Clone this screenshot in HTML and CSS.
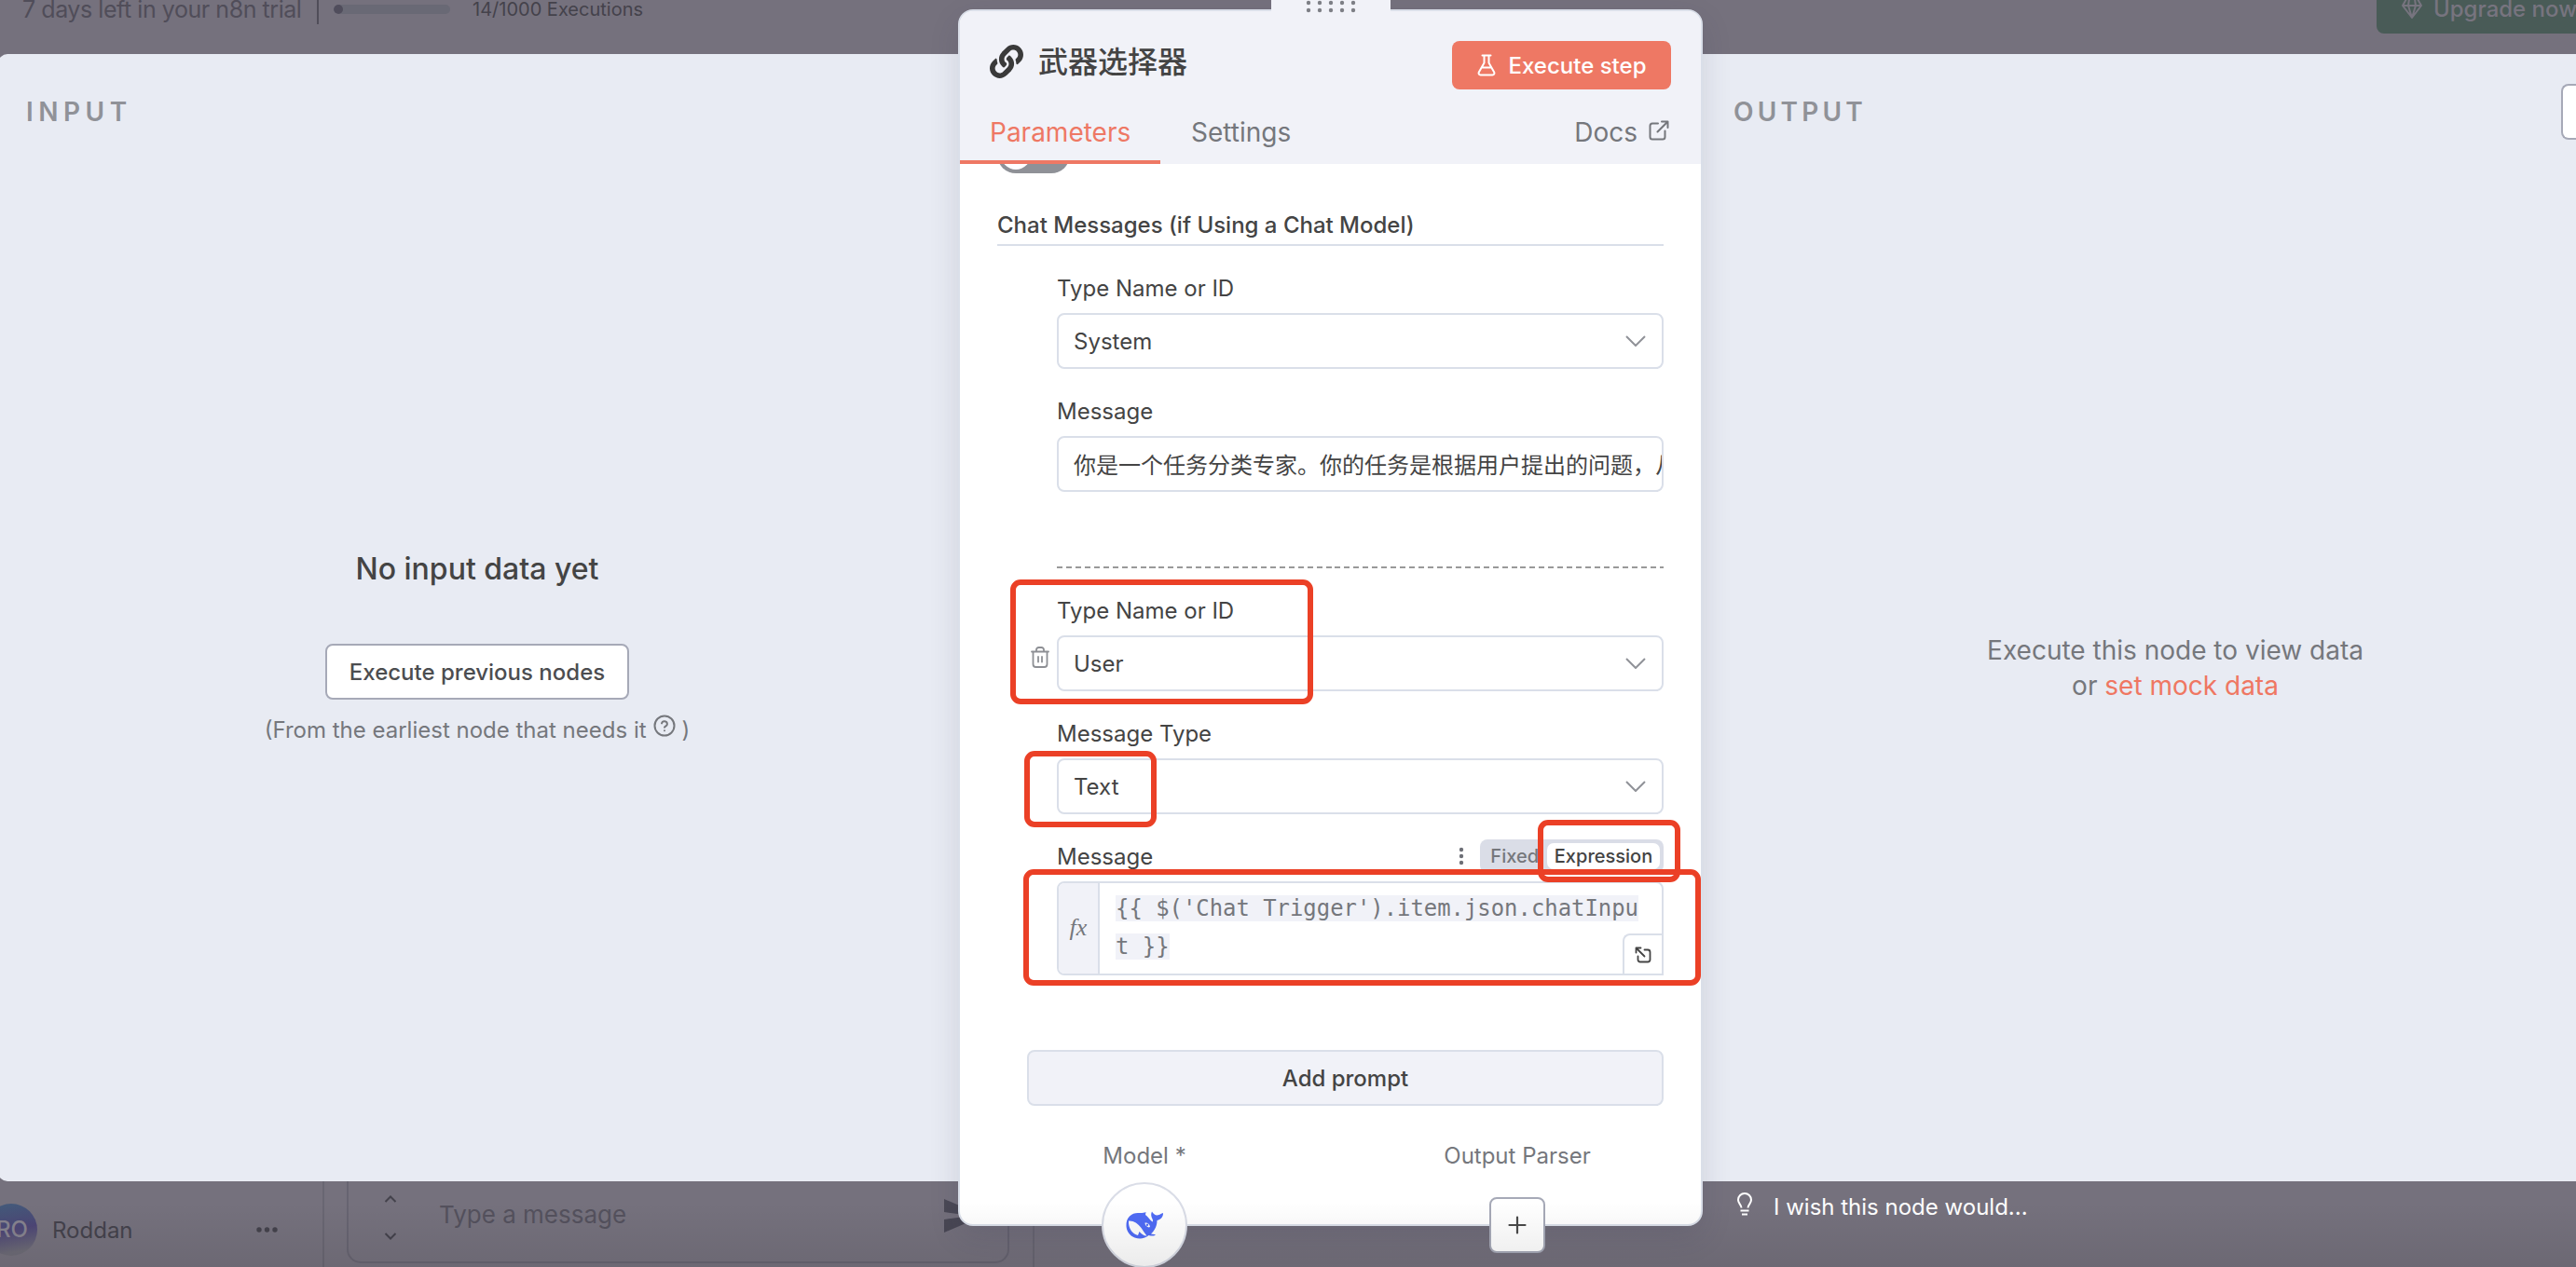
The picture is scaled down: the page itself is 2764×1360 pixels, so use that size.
FILE: index.html
```html
<!DOCTYPE html>
<html lang="en">
<head>
<meta charset="utf-8">
<title>n8n</title>
<link rel="stylesheet" href="styles.css">
</head>
<body>
<div class="app">
  <header class="topbar">
    <span class="trial">7 days left in your n8n trial</span>
    <span class="bar-divider"></span>
    <span class="progress"><span class="progress-fill"></span></span>
    <span class="executions">14/1000 Executions</span>
    <div class="upgrade">
      <svg width="24" height="24" viewBox="0 0 24 24" fill="none" stroke="currentColor" stroke-width="2" stroke-linejoin="round"><path d="M6 2h12l4 7-10 13L2 9zM2 9h20M9 2L8 9l4 13 4-13-1-7"/></svg>
      <span class="upgrade-text">Upgrade now</span>
    </div>
  </header>

  <main class="panels">
    <section class="panel panel-input">
      <h2 class="panel-title">INPUT</h2>
      <div class="empty-input">
        <p class="empty-title">No input data yet</p>
        <button class="btn-outline"><span class="btn-outline-text">Execute previous nodes</span></button>
        <p class="empty-hint"><span class="hint-text">(From the earliest node that needs it</span>
          <svg class="help" width="24" height="24" viewBox="0 0 24 24" fill="none" stroke="currentColor" stroke-width="2" stroke-linecap="round"><circle cx="12" cy="12" r="10.5"/><path d="M9 9.4a3 3 0 0 1 5.9.8c0 2-2.9 2.6-2.9 3.6M12 17.2v.1"/></svg>
          <span>)</span></p>
      </div>
    </section>
    <section class="panel panel-output">
      <div class="output-head">
        <h2 class="panel-title">OUTPUT</h2>
        <span class="edge-button"></span>
      </div>
      <p class="empty-output"><span class="out-text">Execute this node to view data</span><br>or <span class="link">set mock data</span></p>
    </section>
  </main>

  <footer class="bottom">
    <div class="user">
      <span class="avatar">RO</span>
      <span class="username">Roddan</span>
      <svg width="24" height="8" viewBox="0 0 24 8" fill="currentColor"><circle cx="3" cy="4" r="2.7"/><circle cx="11.5" cy="4" r="2.7"/><circle cx="20" cy="4" r="2.7"/></svg>
    </div>
    <div class="chat">
      <div class="chat-box">
        <svg width="14" height="56" viewBox="0 0 14 56" fill="none" stroke="currentColor" stroke-width="2"><path d="M1.500 14L7 8.500l5.500 5.500M1.500 48L7 53.500l5.500-5.500"/></svg>
        <span class="placeholder">Type a message</span>
        <svg class="send" width="42" height="36" viewBox="0 0 42 36" fill="currentColor"><path d="M0 0l42 18L0 36V22l30-4L0 14z"/></svg>
      </div>
    </div>
    <div class="wish">
      <svg width="18" height="26" viewBox="0 0 18 26" fill="none" stroke="currentColor" stroke-width="2"><path d="M5.500 16.500C5.500 13 2 12 2 8a7 7 0 0 1 14 0c0 4-3.500 5-3.500 8.500M4.500 19.500h9M6 23.500h6"/></svg>
      <span class="wish-text">I wish this node would...</span>
    </div>
  </footer>

  <div class="modal">
    <div class="drag">
      <svg width="54" height="14" viewBox="0 0 54 14" fill="#7d7f86"><circle cx="3" cy="3" r="2.200"/><circle cx="15" cy="3" r="2.200"/><circle cx="27" cy="3" r="2.200"/><circle cx="39" cy="3" r="2.200"/><circle cx="51" cy="3" r="2.200"/><circle cx="3" cy="11" r="2.200"/><circle cx="15" cy="11" r="2.200"/><circle cx="27" cy="11" r="2.200"/><circle cx="39" cy="11" r="2.200"/><circle cx="51" cy="11" r="2.200"/></svg>
    </div>
    <div class="modal-head">
      <div class="title-row">
        <svg class="node-icon" width="36" height="36" viewBox="0 0 512 512" fill="#3a3a3a"><path d="M326.612 185.391c59.747 59.809 58.927 155.698.36 214.590-.11.120-.24.250-.36.370l-67.200 67.200c-59.270 59.270-155.699 59.262-214.960 0-59.270-59.260-59.270-155.700 0-214.960l37.106-37.106c9.840-9.840 26.786-3.300 27.294 10.606.648 17.722 3.826 35.527 9.690 52.721 1.986 5.822.567 12.262-3.783 16.612l-13.087 13.087c-28.026 28.026-28.905 73.660-1.155 101.960 28.024 28.579 74.086 28.749 102.325.510l67.200-67.190c28.191-28.191 28.073-73.757 0-101.830-3.701-3.694-7.429-6.564-10.341-8.569a16.037 16.037 0 0 1-6.947-12.606c-.396-10.567 3.348-21.456 11.698-29.806l21.054-21.055c5.521-5.521 14.182-6.199 20.584-1.731a152.482 152.482 0 0 1 20.522 17.197zM467.547 44.449c-59.261-59.262-155.690-59.270-214.960 0l-67.200 67.200c-.120.120-.250.250-.360.370-58.566 58.892-59.387 154.781.360 214.590a152.454 152.454 0 0 0 20.521 17.196c6.402 4.468 15.064 3.789 20.584-1.731l21.054-21.055c8.350-8.350 12.094-19.239 11.698-29.806a16.037 16.037 0 0 0-6.947-12.606c-2.912-2.005-6.640-4.875-10.341-8.569-28.073-28.073-28.191-73.639 0-101.830l67.200-67.190c28.239-28.239 74.300-28.069 102.325.510 27.750 28.300 26.872 73.934-1.155 101.960l-13.087 13.087c-4.350 4.350-5.769 10.790-3.783 16.612 5.864 17.194 9.042 34.999 9.690 52.721.509 13.906 17.454 20.446 27.294 10.606l37.106-37.106c59.271-59.259 59.271-155.699.001-214.959z"/></svg>
        <h1 class="node-title">武器选择器</h1>
        <button class="btn-primary">
          <svg width="20" height="24" viewBox="0 0 20 24" fill="none" stroke="currentColor" stroke-width="2" stroke-linecap="round" stroke-linejoin="round"><path d="M5.500 1.500h9M7.500 1.500v8L1.800 19.500c-.7 1.500.2 3 1.700 3h13c1.500 0 2.400-1.500 1.700-3L12.500 9.500v-8M4.800 14.500h10.400"/></svg>
          <span class="exec-text">Execute step</span>
        </button>
      </div>
      <nav class="tabs">
        <span class="tab tab-active"><span class="param-text">Parameters</span></span>
        <span class="tab tab-settings">Settings</span>
        <span class="tab tab-docs"><span class="docs-text">Docs</span>
          <svg width="22" height="22" viewBox="0 0 22 22" fill="none" stroke="currentColor" stroke-width="2" stroke-linecap="round" stroke-linejoin="round"><path d="M14 1.500h6.500V8M20 2L9.500 12.500M10 3.500H4A2.500 2.500 0 0 0 1.500 6v12A2.500 2.500 0 0 0 4 20.500h11a2.500 2.500 0 0 0 2.500-2.500v-6.500"/></svg></span>
      </nav>
    </div>

    <div class="modal-body">
      <div class="toggle-clip"><span class="toggle"><span class="toggle-knob"></span></span></div>
      <h3 class="section-title"><span class="section-text">Chat Messages (if Using a Chat Model)</span></h3>
      <div class="fields">
        <div class="field">
          <label class="label">Type Name or ID</label>
          <div class="select"><span>System</span><svg class="chev" viewBox="0 0 22 12"><path d="M1 1l10 10L21 1"/></svg></div>
        </div>
        <div class="field">
          <label class="label">Message</label>
          <div class="select text-input">你是一个任务分类专家。你的任务是根据用户提出的问题，从</div>
        </div>
        <div class="dashed"></div>
        <div class="field">
          <label class="label">Type Name or ID</label>
          <div class="select"><span>User</span><svg class="chev" viewBox="0 0 22 12"><path d="M1 1l10 10L21 1"/></svg>
            <svg class="trash" width="20" height="23" viewBox="0 0 20 23" fill="none" stroke="#8d8f94" stroke-width="1.800" stroke-linecap="round" stroke-linejoin="round"><path d="M1 5.500h18M2.500 5.500V19a3 3 0 0 0 3 3h9a3 3 0 0 0 3-3V5.500M6 5V3.500A2.500 2.500 0 0 1 8.500 1h3A2.500 2.500 0 0 1 14 3.500V5M8 11v5.500M12 11v5.500"/></svg>
          </div>
        </div>
        <div class="field">
          <label class="label">Message Type</label>
          <div class="select"><span>Text</span><svg class="chev" viewBox="0 0 22 12"><path d="M1 1l10 10L21 1"/></svg></div>
        </div>
        <div class="field">
          <div class="label label-row"><span>Message</span>
            <span class="options">
              <svg width="6" height="20" viewBox="0 0 6 20" fill="#6e7077"><circle cx="3" cy="3" r="2.200"/><circle cx="3" cy="10" r="2.200"/><circle cx="3" cy="17" r="2.200"/></svg>
              <span class="switch"><span class="switch-fixed">Fixed</span><span class="switch-on">Expression</span></span>
            </span>
          </div>
          <div class="expression">
            <div class="fx">fx</div>
            <div class="code"><span class="code-hl">{{ $('Chat Trigger').item.json.chatInpu</span><br><span class="code-hl">t }}</span></div>
            <div class="expand"><svg width="18" height="18" viewBox="0 0 18 18" fill="none" stroke="#444" stroke-width="1.800" stroke-linecap="round" stroke-linejoin="round"><path d="M1.500 6.500v-5h5M2 2l8.500 8.500M10.500 3.500H14A2.500 2.500 0 0 1 16.500 6v8a2.500 2.500 0 0 1-2.500 2.500H6A2.500 2.500 0 0 1 3.500 14v-3.500"/></svg></div>
          </div>
        </div>
      </div>
      <button class="add-prompt"><span class="add-text">Add prompt</span></button>
      <div class="connections">
        <div class="conn">
          <span class="conn-label">Model *</span>
          <span class="conn-circle">
            <svg width="42" height="32" viewBox="0 0 42 32"><path fill="#4f6bf5" d="M1.500 17C1 7 8 2.500 15 3c3 .1 5.500 0 7.500-1l-.5 3c3 2 4.500 5.500 7.500 7.500 1.500-1.500-.5-3.500-1-5.500-.7-2.500 0-4.500.5-5.500 1.500 2 2.500 3.500 5 4 2.500 0 4-1.500 7-2.500.3 3.500-2 7-6.500 8 0 6-2.500 10.500-6.500 14.500l5 .8c-1 1.500-4 1.700-7.500.7-4 3.500-9.500 4.500-15 2.500C5 27.500 1.800 22.500 1.500 17z"/><path fill="#fdfdfd" d="M4 11.500c5-.5 10 2.500 13.500 7.500 2 3 4 6 6 8.500-3 .3-5-1.500-8-4.500l-1.500 4C8.500 25.500 3.500 20 4 11.500z"/><path fill="#fdfdfd" d="M21.500 13.500c2.500-.5 5 1 5.500 4.500l-1.500.5c-2-.8-4-2-4-5z"/><circle cx="24" cy="15.800" r="1.200" fill="#4f6bf5"/></svg>
          </span>
        </div>
        <div class="conn conn-parser">
          <span class="conn-label">Output Parser</span>
          <span class="conn-plus"><svg width="20" height="20" viewBox="0 0 20 20" stroke="#4a4a4a" stroke-width="2.200" stroke-linecap="round"><path d="M10 1.500v17M1.500 10h17"/></svg></span>
        </div>
      </div>
    </div>
  </div>

  <div class="mark mark-type"></div>
  <div class="mark mark-text"></div>
  <div class="mark mark-switch"></div>
  <div class="mark mark-expression"></div>
  <div class="shade"></div>
</div>
</body>
</html>
```

FILE: styles.css
```css
* { box-sizing: border-box; }
body { margin: 0; font-family: Inter, "Noto Sans CJK SC", sans-serif; font-size: 24px; color: #444; }
h1, h2, h3, p { margin: 0; }
button { font: inherit; color: inherit; margin: 0; padding: 0; }
svg { display: block; flex: none; }
.app { position: relative; width: 2764px; height: 1360px; overflow: hidden; background: #75717d; display: flex; flex-direction: column; white-space: nowrap; }

.topbar { height: 58px; flex: none; display: flex; align-items: flex-start; padding-left: 24px; color: #504d59; }
.trial { width: 316px; font-size: 25px; line-height: 20px; letter-spacing: -.45px; }
.bar-divider { width: 2px; height: 26px; background: #504d59; }
.progress { width: 125px; height: 10px; margin: 5px 24px 0 16px; border-radius: 5px; background: #696975; overflow: hidden; }
.progress-fill { display: block; width: 10px; height: 10px; border-radius: 5px; background: #504d5c; }
.executions { font-size: 20px; line-height: 20px; color: #44424b; }
.upgrade { margin-left: auto; width: 214px; height: 36px; display: flex; gap: 11px; padding-left: 26px; background: #495b57; border-radius: 0 0 0 8px; color: #77747f; overflow: hidden; }
.upgrade svg { margin-top: -3px; }
.upgrade-text { font-size: 24px; font-weight: 500; line-height: 20px; }

.panels { height: 1210px; flex: none; display: flex; }
.panel { background: #e8ebf3; }
.panel-input { flex: none; width: 1330px; margin-left: -2px; padding: 48px 0 0 30px; border-radius: 10px 0 0 10px; }
.panel-output { flex: 1; min-width: 0; padding: 32px 0 0 532px; }
.panel-title { font-size: 28px; line-height: 28px; font-weight: 600; letter-spacing: 4.200px; color: #909298; }
.panel-input .panel-title { height: 28px; letter-spacing: 5.500px; }
.output-head { display: flex; align-items: flex-start; justify-content: space-between; height: 60px; }
.output-head .panel-title { margin-top: 16px; }
.edge-button { width: 16px; height: 60px; border: 2px solid #a6a9b7; border-right: 0; border-radius: 8px 0 0 8px; background: #fff; }
.empty-input { width: 968px; display: flex; flex-direction: column; align-items: center; margin-top: 457px; }
.empty-title { font-size: 32px; line-height: 40px; font-weight: 450; color: #444; }
.btn-outline { width: 326px; height: 60px; margin-top: 60px; border: 2px solid #a6a9b7; border-radius: 8px; background: #fff; font-weight: 500; color: #4c4d50; }
.empty-hint { display: flex; gap: 7px; margin-top: 18px; line-height: 30px; color: #75777c; }
.help { margin-top: -2px; }
.empty-output { margin-top: 529px; padding-left: 44px; text-align: center; font-size: 28px; line-height: 38px; color: #75777c; }
.link { color: #ef7762; }

.bottom { height: 92px; flex: none; display: flex; color: #44424c; }
.user { width: 348px; display: flex; align-items: center; padding-top: 12px; border-right: 2px solid #696672; }
.avatar { width: 56px; height: 56px; margin-left: -16px; border-radius: 50%; background: linear-gradient(170deg, #44587a 10%, #4d4676 50%, #6d6b76 88%); color: #86838f; font-size: 24px; line-height: 56px; padding-left: 12px; font-weight: 500; }
.username { width: 235px; padding-left: 16px; }
.chat { width: 762px; padding: 0 25px 0 24px; border-right: 2px solid #696672; }
.chat-box { height: 88px; display: flex; align-items: flex-start; border: 2px solid #676471; border-top: 0; border-radius: 0 0 15px 15px; padding-left: 38px; }
.chat-box > svg:first-child { margin-top: 8px; }
.placeholder { padding-left: 45px; width: 587px; font-size: 26px; line-height: 72px; color: #54515d; }
.send { margin-top: 19px; color: #4a4855; }
.wish { margin-left: 753px; display: flex; gap: 22px; padding-top: 12px; color: #fff; }
.wish-text { line-height: 32px; }

.modal { position: absolute; left: 1028px; top: 10px; width: 799px; height: 1306px; border: 2px solid #dadfe9; border-radius: 16px; background: #fff; box-shadow: 0 12px 32px rgba(50, 50, 80, .14); }
.drag { position: absolute; left: 334px; top: -12px; width: 128px; height: 14px; background: #f1f2f8; padding-left: 37px; }
.modal-head { height: 164px; background: #f1f2f8; border-radius: 14px 14px 0 0; display: flex; flex-direction: column; }
.title-row { height: 84px; padding: 32px 32px 0 32px; display: flex; align-items: flex-start; }
.node-icon { margin-top: 4px; }
.node-title { margin-left: 16px; font-size: 32px; line-height: 44px; margin-top: 1px; font-weight: 500; color: #444; }
.btn-primary { margin-left: auto; width: 235px; height: 52px; border: 0; border-radius: 8px; background: #ee7864; color: #fff; display: flex; align-items: center; justify-content: center; gap: 14px; font-weight: 450; }
.tabs { flex: 1; display: flex; font-size: 28px; color: #75777c; }
.tab { line-height: 93px; height: 80px; }
.tab-active { width: 215px; padding-left: 32px; color: #ee7864; border-bottom: 4px solid #ee7864; }
.tab-settings { padding-left: 33px; }
.tab-docs { margin-left: auto; padding-right: 34px; display: flex; gap: 12px; }
.tab-docs svg { margin-top: 33px; }

.modal-body { padding: 0 40px 0 40px; }
.toggle-clip { height: 10px; overflow: hidden; display: flex; align-items: flex-end; }
.toggle { width: 78px; height: 40px; border-radius: 20px; background: #8f9197; padding: 4px; flex: none; }
.toggle-knob { display: block; width: 32px; height: 32px; border-radius: 50%; background: #fff; }
.section-title { margin-top: 40px; height: 38px; border-bottom: 2px solid #dadfe9; font-size: 24px; font-weight: 500; line-height: 32px; }
.fields { padding-left: 64px; }
.field { margin-top: 31px; }
.label { display: block; height: 28px; line-height: 30px; margin-bottom: 13px; }
.select { position: relative; height: 60px; border: 2px solid #dadfe9; border-radius: 8px; padding: 0 17px 0 16px; display: flex; align-items: center; justify-content: space-between; background: #fff; }
.text-input { overflow: hidden; padding-right: 0; padding-bottom: 2px; }
.chev { width: 22px; height: 12px; fill: none; stroke: #909298; stroke-width: 2; }
.trash { position: absolute; left: -30px; top: 10px; }
.dashed { height: 2px; margin-top: 80px; background: repeating-linear-gradient(90deg, #999 0 6px, transparent 6px 9.950px); }
.label-row { display: flex; justify-content: space-between; }
.options { display: flex; align-items: center; gap: 17px; }
.switch { width: 197px; height: 36px; border-radius: 8px; background: #dadde7; padding: 4px; display: flex; align-items: center; justify-content: flex-end; font-size: 20px; font-weight: 500; color: #75777c; }
.switch-fixed { margin-right: 9px; }
.switch-on { width: 121px; height: 28px; line-height: 29px; text-align: center; border-radius: 7px; background: #fff; color: #444; }
.expression { position: relative; height: 101px; border: 2px solid #dadfe9; border-radius: 8px 8px 0 8px; display: flex; overflow: hidden; }
.fx { width: 44px; border-right: 2px solid #dadfe9; background: #f1f2f8; font: italic 26px/95px "Liberation Serif", serif; text-align: center; color: #75777c; }
.code { padding: 7px 0 0 17px; font: 23.900px/41px "DejaVu Sans Mono", monospace; color: #75777c; }
.code-hl { background: #f1f2f8; }
.expand { position: absolute; right: 0; bottom: 0; width: 42px; height: 43px; border: solid #dadfe9; border-width: 2px 0 0 2px; border-radius: 8px 0 0 0; background: #fff; padding: 12px 0 0 11px; }
.add-prompt { display: block; width: 683px; height: 60px; margin: 80px 0 0 32px; border: 2px solid #dadfe9; border-radius: 8px; background: #f1f2f8; font-weight: 450; }
.connections { display: grid; grid-template-columns: 396px 1fr; margin: 40px -40px 0 -40px; }
.conn { display: flex; flex-direction: column; align-items: center; }
.conn-parser { padding-left: 5px; }
.conn-label { line-height: 28px; color: #75777c; }
.conn-circle { width: 92px; height: 92px; margin-top: 14px; border: 2px solid #dadde7; border-radius: 50%; background: #fff; display: flex; align-items: center; justify-content: center; }
.conn-plus { width: 60px; height: 60px; margin-top: 30px; border: 2px solid #a6a9b7; border-radius: 8px; background: #fff; display: flex; align-items: center; justify-content: center; }

.mark { position: absolute; border: 6px solid #eb4026; border-radius: 11px; }
.mark-type { left: 1084px; top: 622px; width: 325px; height: 134px; }
.mark-text { left: 1099px; top: 806px; width: 142px; height: 82px; }
.mark-switch { left: 1650px; top: 880px; width: 153px; height: 67px; }
.mark-expression { left: 1098px; top: 933px; width: 727px; height: 125px; }
.shade { position: absolute; left: 0; right: 0; bottom: 0; height: 70px; background: linear-gradient(rgba(0, 0, 0, 0), rgba(0, 0, 0, .08)); }
```
